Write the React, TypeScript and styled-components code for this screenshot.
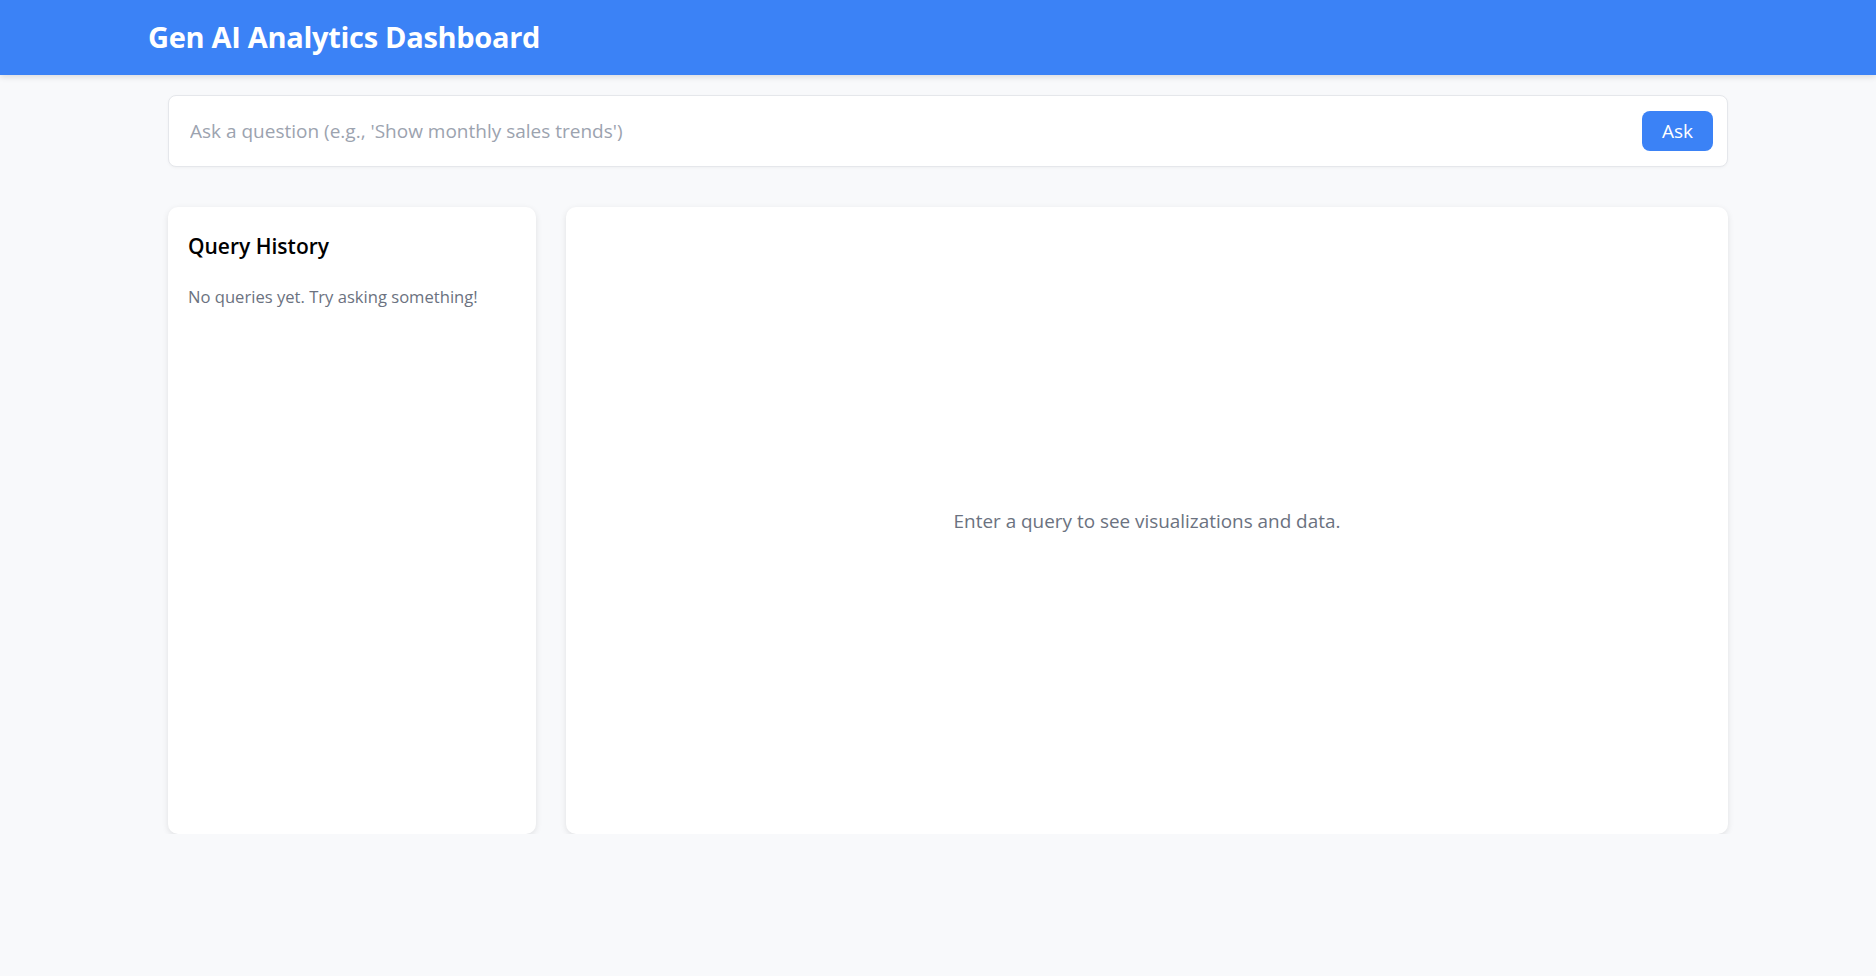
import React from "react";
import styled, { createGlobalStyle } from "styled-components";

const GlobalStyle = createGlobalStyle`
  html, body {
    margin: 0;
    padding: 0;
    background: #f8f9fb;
    font-family: "Open Sans", "Noto Sans", Arial, sans-serif;
  }
  * { box-sizing: border-box; }
`;

const Header = styled.header`
  height: 75px;
  background: #3b82f6;
  display: flex;
  align-items: center;
  padding: 0 0 2px 148px;
  box-shadow: 0 2px 6px rgba(0, 0, 0, 0.12);
`;

const Title = styled.h1`
  margin: 0;
  color: #ffffff;
  font-size: 29px;
  font-weight: 700;
  letter-spacing: -0.3px;
`;

const Main = styled.main`
  width: 1560px;
  margin-left: 168px;
  padding-top: 20px;
  display: flex;
  flex-direction: column;
  gap: 40px;
`;

const SearchBar = styled.form`
  height: 72px;
  background: #ffffff;
  border: 1px solid #e5e7eb;
  border-radius: 8px;
  box-shadow: 0 1px 3px rgba(0, 0, 0, 0.04);
  display: flex;
  align-items: center;
  padding: 0 14px 0 19px;
  gap: 12px;
`;

const Input = styled.input`
  flex: 1;
  border: none;
  outline: none;
  background: transparent;
  font-family: inherit;
  font-size: 19px;
  color: #374151;
  &::placeholder {
    color: #9ca3af;
  }
`;

const AskButton = styled.button`
  width: 71px;
  height: 40px;
  border: none;
  border-radius: 8px;
  background: #3b82f6;
  color: #ffffff;
  font-family: inherit;
  font-size: 19px;
  cursor: pointer;
`;

const Columns = styled.div`
  display: grid;
  grid-template-columns: 368px 1fr;
  gap: 30px;
  height: 627px;
`;

const Card = styled.section<{ $center?: boolean }>`
  background: #ffffff;
  border-radius: 10px;
  box-shadow: 0 2px 6px rgba(0, 0, 0, 0.1);
  padding: 20px;
  display: flex;
  flex-direction: column;
  ${(p) => (p.$center ? "align-items: center; justify-content: center;" : "")}
`;

const CardTitle = styled.h2`
  margin: 4.5px 0 0;
  font-size: 21px;
  font-weight: 600;
  color: #000000;
`;

const Muted = styled.p<{ $size: number }>`
  margin: 0;
  color: #6b7280;
  font-size: ${(p) => p.$size}px;
`;

const HistoryText = styled(Muted)`
  margin-top: 25px;
`;

export default function App() {
  return (
    <>
      <GlobalStyle />
      <Header>
        <Title>Gen AI Analytics Dashboard</Title>
      </Header>
      <Main>
        <SearchBar onSubmit={(e) => e.preventDefault()}>
          <Input placeholder="Ask a question (e.g., 'Show monthly sales trends')" />
          <AskButton type="submit">Ask</AskButton>
        </SearchBar>
        <Columns>
          <Card>
            <CardTitle>Query History</CardTitle>
            <HistoryText $size={16.6}>No queries yet. Try asking something!</HistoryText>
          </Card>
          <Card $center>
            <Muted $size={18.9}>Enter a query to see visualizations and data.</Muted>
          </Card>
        </Columns>
      </Main>
    </>
  );
}
